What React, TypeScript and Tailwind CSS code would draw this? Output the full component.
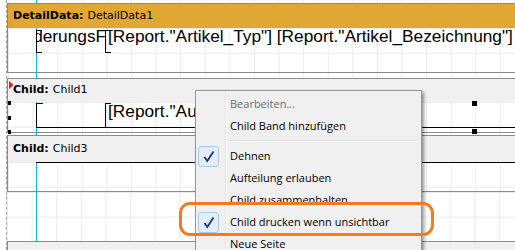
import React from 'react';

const gridBg =
  'bg-white bg-[linear-gradient(to_right,#ebebeb_1px,transparent_1px),linear-gradient(to_bottom,#ebebeb_1px,transparent_1px)] bg-size-[24.6px_24.6px]';
const pageGrid =
  'bg-white bg-[linear-gradient(to_right,#ebebeb_1px,transparent_1px)] bg-size-[24.6px_100%] bg-position-[1px_0]';

type MenuEntry = { label?: string; disabled?: boolean; checked?: boolean; separator?: boolean };

const menuEntries: MenuEntry[] = [
  { label: 'Bearbeiten...', disabled: true },
  { label: 'Child Band hinzufügen' },
  { separator: true },
  { label: 'Dehnen', checked: true },
  { label: 'Aufteilung erlauben' },
  { label: 'Child zusammenhalten' },
  { label: 'Child drucken wenn unsichtbar', checked: true },
  { label: 'Neue Seite' },
];

const BandHeader: React.FC<{ kind: string; name: string; className: string }> = ({ kind, name, className }) => (
  <div className={`relative z-[2] flex items-center gap-[4px] pl-[5px] font-['DejaVu_Sans',sans-serif] text-[11px] text-black ${className}`}>
    <span className="font-bold">{kind}:</span>
    <span>{name}</span>
  </div>
);

const CheckBox = () => (
  <span className="ml-[2px] flex h-[21px] w-[21px] items-center justify-center rounded-[3px] border border-[#a9c9ee] bg-[#e3eefb]">
    <svg width="12" height="13" viewBox="0 0 12 13">
      <path d="M1.5 7 L4.3 11 L10.5 1.5" stroke="#17298a" strokeWidth="1.7" fill="none" />
    </svg>
  </span>
);

const ContextMenu = () => (
  <div className="absolute left-[195px] top-[90px] z-[3] h-[175px] w-[227px] border border-[#979797] bg-[#f0f0f0] pt-[2px] font-['Open_Sans',sans-serif] text-[11px] shadow-[2px_2px_3px_rgba(0,0,0,0.4)]">
    <div className="absolute left-[29px] top-0 h-full w-[2px] border-l border-r border-l-[#e2e3e3] border-r-white" />
    {menuEntries.map((e, i) =>
      e.separator ? (
        <div key={i} className="flex h-[8px] items-center">
          <div className="ml-[30px] mr-[3px] flex-1 border-t border-b border-t-[#e0e0e0] border-b-white" />
        </div>
      ) : (
        <div key={i} className="flex h-[22px] items-center">
          <div className="flex w-[29px] items-center">{e.checked && <CheckBox />}</div>
          <span className={`ml-[5px] ${e.disabled ? 'text-[#6d6d6d]' : 'text-black'}`}>{e.label}</span>
        </div>
      )
    )}
  </div>
);

export default function App() {
  return (
    <div className="relative flex h-[250px] w-[515px] overflow-hidden bg-white font-['Liberation_Sans',Arial,sans-serif]">
      <div className="w-[6px]" />
      <div className={`flex flex-1 flex-col border-l border-dashed border-[#a6a6a6] pt-[3px] ${pageGrid}`}>
        {/* DetailData */}
        <div className="border-y border-l border-[#8a8a8a]">
          <BandHeader kind="DetailData" name="DetailData1" className="h-[24px] bg-[#e1a733]" />
          <div className={`flex h-[44px] items-start pl-[28px] pt-[2px] ${gridBg}`}>
            <div className="relative z-[2] h-[23px] w-[69px] overflow-hidden border-l border-black">
              <span className="absolute left-0 top-0 h-px w-[5px] bg-black" />
              <span className="absolute bottom-0 left-0 h-px w-[5px] bg-black" />
              <div className="-ml-[25px] whitespace-nowrap text-[17.3px] leading-[13px] text-black">ÄnderungsFrist</div>
            </div>
            <div className="relative z-[2] h-[23px] flex-1 overflow-hidden border-l border-black">
              <span className="absolute bottom-0 left-0 h-px w-[5px] bg-black" />
              <span className="absolute left-0 top-0 h-px w-[5px] bg-black" />
              <div className="pl-[2px] whitespace-nowrap text-[17.3px] leading-[13px] text-black">
                [Report."Artikel_Typ"] [Report."Artikel_Bezeichnung"]
              </div>
            </div>
          </div>
        </div>

        {/* Child1 */}
        <div className="mt-[5px] border-y border-l border-[#8a8a8a]">
          <BandHeader kind="Child" name="Child1" className="h-[23px] bg-[#f0f0f0]" />
          <div className={`h-[30px] pl-[28px] pt-[1px] ${gridBg}`}>
            <div className="relative z-[2] flex h-[25px] border-b border-black">
              <div className="relative w-[69px] border-l border-black">
                <span className="absolute left-0 top-0 h-px w-[6px] bg-black" />
              </div>
              <div className="relative flex-1 overflow-hidden border-l border-black">
                <span className="absolute left-0 top-0 h-px w-[5px] bg-black" />
                <div className="pl-[2px] pt-[2px] whitespace-nowrap text-[17.3px] leading-[13px] text-black">
                  [Report."Ausgabe_Bemerkung"]
                </div>
              </div>
            </div>
          </div>
        </div>

        {/* Child3 */}
        <div className="mt-[2px] border-y border-l border-[#8a8a8a]">
          <BandHeader kind="Child" name="Child3" className="h-[26px] bg-[#f0f0f0]" />
          <div className={`h-[29px] pl-[28px] ${gridBg}`}>
            <div className="relative z-[2] border-t border-black" />
          </div>
        </div>

        <div className={`h-[53px] ${gridBg}`} />
        <div className="relative z-[2] h-[10px] border-t border-l border-[#8a8a8a] bg-[#f0f0f0]" />
      </div>

      {/* guide line */}
      <div className="absolute left-[36px] top-0 z-[1] h-full w-px bg-[#00bdf2]" />

      {/* red marker on Child1 */}
      <svg className="absolute left-[9px] top-[81px] z-[3]" width="5" height="8" viewBox="0 0 5 8">
        <polygon points="0,0 4.5,4 0,8" fill="#e41b1b" />
      </svg>

      {/* selection handles */}
      <span className="absolute left-[8px] top-[101px] z-[3] h-[4px] w-[3px] bg-black" />
      <span className="absolute left-[8px] top-[116px] z-[3] h-[4px] w-[3px] bg-black" />
      <span className="absolute left-[8px] top-[130px] z-[3] h-[4px] w-[3px] bg-black" />
      <span className="absolute left-[472px] top-[101px] z-[3] h-[5px] w-[5px] bg-black" />
      <span className="absolute left-[472px] top-[129px] z-[3] h-[5px] w-[5px] bg-black" />

      <ContextMenu />

      {/* annotation */}
      <div className="absolute left-[179px] top-[202px] z-[4] h-[34px] w-[255px] rounded-[11px] border-[3px] border-[#f47a20]" />
    </div>
  );
}
